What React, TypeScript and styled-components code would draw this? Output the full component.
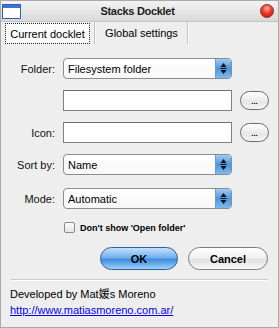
import styled, { createGlobalStyle } from "styled-components";

const GlobalStyle = createGlobalStyle`
    body {
        margin: 0;
        background: #ffffff;
        font-family: "Liberation Sans", Arial, "Noto Sans CJK SC", sans-serif;
    }
`

const Window = styled.div`
    width: 279px;
    height: 328px;
    box-sizing: border-box;
    border: 1px solid #a9a9a9;
    background: #eeeeee;
    display: flex;
    flex-direction: column;
    font-size: 11px;
    color: #000;
`

const TitleBar = styled.div`
    height: 20px;
    display: flex;
    align-items: center;
    padding: 0 4px 0 1px;
    background: linear-gradient(#f3f3f3, #d9d9d9);
    border-bottom: 1px solid #c4c4c4;
`

const Title = styled.div`
    flex: 1;
    text-align: center;
    font-weight: bold;
    font-size: 11px;
    letter-spacing: -0.3px;
    color: #1c1c1c;
    padding-right: 6px;
`

const CloseDot = styled.div`
    width: 14px;
    height: 14px;
    border-radius: 50%;
    box-sizing: border-box;
    border: 1px solid #9a2a24;
    background: radial-gradient(circle at 50% 30%, #ffb3a8 0%, #f0392c 45%, #b5140c 100%);
`

const TabStrip = styled.div`
    height: 22px;
    display: flex;
    align-items: stretch;
`

const TabCell: any = styled.div`
    width: ${(props: any) => props.wide}px;
    box-sizing: border-box;
    display: flex;
    align-items: center;
    justify-content: center;
    padding: ${(props: any) => props.active ? "1px 4px 0 4px" : "0"};
    border-right: 1px solid #c6c6c6;
    box-shadow: 1px 0 0 #fafafa;
    margin-right: 1px;
`

const FocusBox = styled.div`
    flex: 1;
    height: 100%;
    box-sizing: border-box;
    border: 1px dotted #222;
    background: #fbfbfb;
    display: flex;
    align-items: center;
    justify-content: center;
`

const Content = styled.div`
    display: flex;
    flex-direction: column;
    padding-top: 14px;
`

const Row: any = styled.div`
    display: flex;
    align-items: center;
    height: 21px;
    margin-bottom: ${(props: any) => props.after ?? 11}px;
`

const Label = styled.div`
    width: 54px;
    margin-right: 8px;
    text-align: right;
    color: #111;
`

const Select = styled.div`
    position: relative;
    width: 169px;
    height: 21px;
    box-sizing: border-box;
    border: 1px solid #8c8c8c;
    border-radius: 4px;
    background: linear-gradient(#ffffff, #f7f7f7);
    display: flex;
    align-items: center;
    padding-left: 4px;
    overflow: hidden;
`

const Spinner = styled.div`
    position: absolute;
    right: 0;
    top: 0;
    bottom: 0;
    width: 15px;
    border-left: 1px solid #6d9ad0;
    background: linear-gradient(#9fcdf6, #4c95e2 50%, #7cb9f0);
    display: flex;
    align-items: center;
    justify-content: center;
`

const TextField = styled.div`
    width: 169px;
    height: 21px;
    box-sizing: border-box;
    border: 1px solid #808080;
    border-top-color: #6f6f6f;
    background: #fff;
`

const DotsButton = styled.div`
    margin-left: 8px;
    width: 29px;
    height: 19px;
    box-sizing: border-box;
    border: 1px solid #6c6c6c;
    border-radius: 10px;
    background: linear-gradient(#ffffff, #e6e6e6 60%, #f6f6f6);
    display: flex;
    align-items: center;
    justify-content: center;
    font-size: 8px;
    font-weight: bold;
    line-height: 1;
    padding-top: 2px;
`

const CheckRow = styled.div`
    display: flex;
    align-items: center;
    height: 11px;
    padding-left: 63px;
    margin-bottom: 14px;
`

const CheckBox = styled.div`
    width: 11px;
    height: 11px;
    box-sizing: border-box;
    border: 1px solid #8a8a8a;
    border-radius: 2px;
    background: linear-gradient(#fdfdfd, #e4e4e4);
    margin-right: 5px;
`

const CheckText = styled.span`
    font-size: 9px;
    font-weight: bold;
`

const ButtonRow = styled.div`
    display: flex;
    justify-content: flex-end;
    gap: 10px;
    padding-right: 10px;
    height: 23px;
`

const PillButton: any = styled.div`
    width: ${(props: any) => props.wide}px;
    box-sizing: border-box;
    border-radius: 12px;
    display: flex;
    align-items: center;
    justify-content: center;
    font-weight: bold;
    font-size: 11px;
    ${(props: any) => props.primary ?
    `
        border: 1px solid #2f5f9e;
        background: linear-gradient(#c4e1fb, #73b1ee 45%, #3f8ee0 55%, #9fd1fa);
    ` :
    `
        border: 1px solid #7c7c7c;
        background: linear-gradient(#ffffff, #eeeeee 50%, #e1e1e1 55%, #fafafa);
    `
    }
`

const Separator = styled.div`
    margin: 9px 10px 6px 10px;
    height: 1px;
    background: #c9c9c9;
    box-shadow: 0 1px 0 #fbfbfb;
`

const Credits = styled.div`
    padding-left: 9px;
    line-height: 16px;
    font-size: 11px;
`

const Link = styled.a`
    color: #0000ee;
    text-decoration: underline;
`

function WindowIcon() {
    return (
        <svg width="19" height="15" viewBox="0 0 19 15">
            <rect x="0.5" y="0.5" width="18" height="14" fill="#ffffff" stroke="#2d5fb8" />
            <rect x="1" y="1" width="17" height="3" fill="#3c73d0" />
        </svg>
    )
}

function Arrows() {
    return (
        <svg width="7" height="13" viewBox="0 0 7 13">
            <path d="M3.5 1 L6.5 5 L0.5 5 Z" fill="#111" />
            <rect x="0.5" y="6" width="6" height="1" fill="#111" />
            <path d="M0.5 8 L6.5 8 L3.5 12 Z" fill="#111" />
        </svg>
    )
}

function Dropdown({ value }: { value: string }) {
    return (
        <Select>
            {value}
            <Spinner><Arrows /></Spinner>
        </Select>
    )
}

export default function App() {
    return (
        <>
            <GlobalStyle />
            <Window>
                <TitleBar>
                    <WindowIcon />
                    <Title>Stacks Docklet</Title>
                    <CloseDot />
                </TitleBar>
                <TabStrip>
                    <TabCell active wide={94}>
                        <FocusBox>Current docklet</FocusBox>
                    </TabCell>
                    <TabCell wide={92}>Global settings</TabCell>
                </TabStrip>
                <Content>
                    <Row>
                        <Label>Folder:</Label>
                        <Dropdown value="Filesystem folder" />
                    </Row>
                    <Row>
                        <Label />
                        <TextField />
                        <DotsButton>...</DotsButton>
                    </Row>
                    <Row>
                        <Label>Icon:</Label>
                        <TextField />
                        <DotsButton>...</DotsButton>
                    </Row>
                    <Row after={13}>
                        <Label>Sort by:</Label>
                        <Dropdown value="Name" />
                    </Row>
                    <Row after={13}>
                        <Label>Mode:</Label>
                        <Dropdown value="Automatic" />
                    </Row>
                    <CheckRow>
                        <CheckBox />
                        <CheckText>Don't show 'Open folder'</CheckText>
                    </CheckRow>
                    <ButtonRow>
                        <PillButton primary wide={78}>OK</PillButton>
                        <PillButton wide={80}>Cancel</PillButton>
                    </ButtonRow>
                    <Separator />
                    <Credits>
                        <div>Developed by Mat媛s Moreno</div>
                        <Link href="#">http://www.matiasmoreno.com.ar/</Link>
                    </Credits>
                </Content>
            </Window>
        </>
    )
}
